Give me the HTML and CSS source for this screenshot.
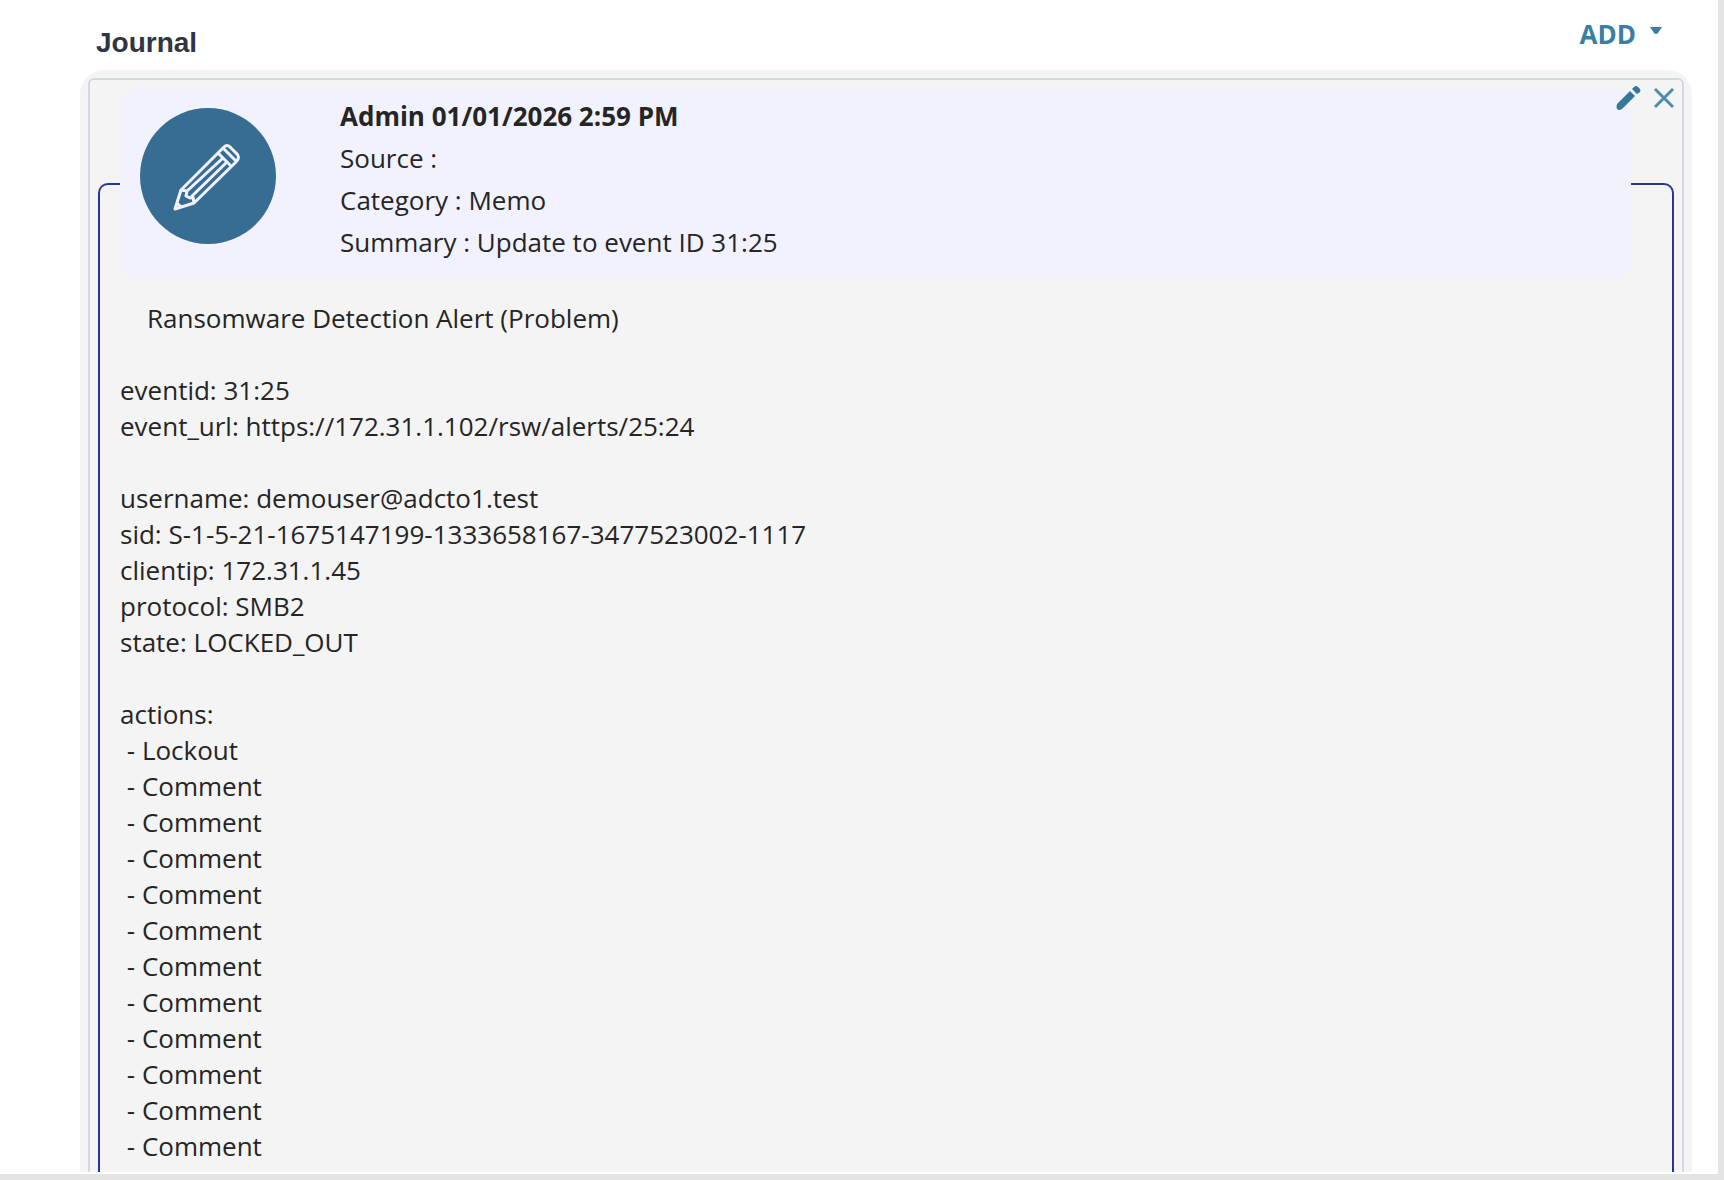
FILE: index.html
```html
<!DOCTYPE html>
<html lang="en">
<head>
<meta charset="utf-8">
<title>Journal</title>
<link rel="stylesheet" href="styles.css">
</head>
<body>
<main class="journal">
  <header class="journal-head">
    <h1 class="journal-title">Journal</h1>
    <button class="add-button" type="button">ADD
      <svg class="caret" viewBox="0 0 12 8" aria-hidden="true"><path d="M0 0H12L8 6Q6 8 4 6Z"/></svg>
    </button>
  </header>
  <section class="entries">
    <article class="entry">
      <div class="entry-actions">
        <button class="icon-button" type="button" aria-label="Edit entry">
          <svg viewBox="0 0 26 26" aria-hidden="true"><path class="solid" d="M2 19 15 6 20 11 7 24Q4 26 2 24Q1 22 2 19ZM17 4 19 2Q21 0 23 2L25 4Q26 6 25 7L22 9Z"/></svg>
        </button>
        <button class="icon-button" type="button" aria-label="Delete entry">
          <svg viewBox="0 0 26 26" aria-hidden="true"><path class="cross" d="M4 4 22 22M22 4 4 22"/></svg>
        </button>
      </div>
      <fieldset class="entry-box">
        <legend class="entry-legend">
          <svg class="avatar" viewBox="0 0 136 136" aria-hidden="true">
            <circle cx="68" cy="68" r="68"/>
            <path d="M35 101 41 82 83 40Q87 35 91 40L96 45Q101 49 96 54L54 95ZM78 45 91 58M83 40 96 53M41 82 47 83 46 88 50 90 53 89 54 95M47 83 83 50M51 89 87 54M37 95 41 99"/>
          </svg>
          <div class="entry-meta">
            <strong>Admin 01/01/2026 2:59 PM</strong>
            <span>Source :</span>
            <span>Category : Memo</span>
            <span>Summary : Update to event ID 31:25</span>
          </div>
        </legend>
        <div class="entry-text">    Ransomware Detection Alert (Problem)

eventid: 31:25
event_url: https://172.31.1.102/rsw/alerts/25:24

username: demouser@adcto1.test
sid: S-1-5-21-1675147199-1333658167-3477523002-1117
clientip: 172.31.1.45
protocol: SMB2
state: LOCKED_OUT

actions:
 - Lockout
 - Comment
 - Comment
 - Comment
 - Comment
 - Comment
 - Comment
 - Comment
 - Comment
 - Comment
 - Comment
 - Comment</div>
      </fieldset>
    </article>
  </section>
</main>
</body>
</html>
```
FILE: styles.css
```css
* {
  box-sizing: border-box;
}

body {
  margin: 0;
  background: #e4e4e4;
  color: #252525;
  font: 26px/36px "Open Sans", "Noto Sans", sans-serif;
}

.journal {
  margin: 0 6px 6px 0;
  padding: 0 26px 2px 80px;
  background: #fff;
}

.journal-head {
  display: flex;
  justify-content: space-between;
  height: 70px;
  padding: 16px 30px 0 16px;
}

.journal-title {
  margin: 9px 0 0;
  color: #313543;
  font: bold 28px/36px "Liberation Sans", Arial, sans-serif;
}

button {
  padding: 0;
  border: 0;
  background: none;
  color: #3a7fa3;
  font: inherit;
  cursor: pointer;
}

.add-button {
  display: flex;
  gap: 14px;
  height: 36px;
  font-weight: bold;
}

.caret {
  width: 12px;
  height: 8px;
  margin-top: 11px;
  fill: #3a7fa3;
}

.entries {
  padding: 8px 8px 0;
  border-radius: 24px 24px 0 0;
  background: #f4f4f4;
}

.entry {
  position: relative;
  padding: 8px 8px 0;
  border: 2px solid #d3d8e2;
  border-bottom: 0;
  border-radius: 6px 6px 0 0;
}

.entry-box {
  min-width: 0;
  margin: 0;
  padding: 0 41px 8px 20px;
  border: 2px solid #283593;
  border-bottom: 0;
  border-radius: 10px 10px 0 0;
}

.entry-legend {
  display: flex;
  gap: 64px;
  width: 100%;
  padding: 7px 20px 17px;
  border-radius: 20px;
  background: #f2f2ff;
}

.avatar {
  flex: none;
  width: 136px;
  height: 136px;
  margin-top: 13px;
}

.avatar circle {
  fill: #386d93;
}

.avatar path {
  fill: none;
  stroke: #f2f2ff;
  stroke-width: 3;
  stroke-linejoin: round;
}

.entry-meta {
  display: flex;
  flex-direction: column;
  line-height: 42px;
}

.entry-text {
  padding-top: 20px;
  white-space: pre-wrap;
  overflow-wrap: anywhere;
}

.entry-actions {
  position: absolute;
  top: 5px;
  right: 5px;
  display: flex;
  gap: 10px;
}

.icon-button {
  width: 26px;
  height: 26px;
}

.icon-button svg {
  display: block;
}

.solid {
  fill: #35789c;
}

.cross {
  fill: none;
  stroke: #4d8cab;
  stroke-width: 3;
}
```
